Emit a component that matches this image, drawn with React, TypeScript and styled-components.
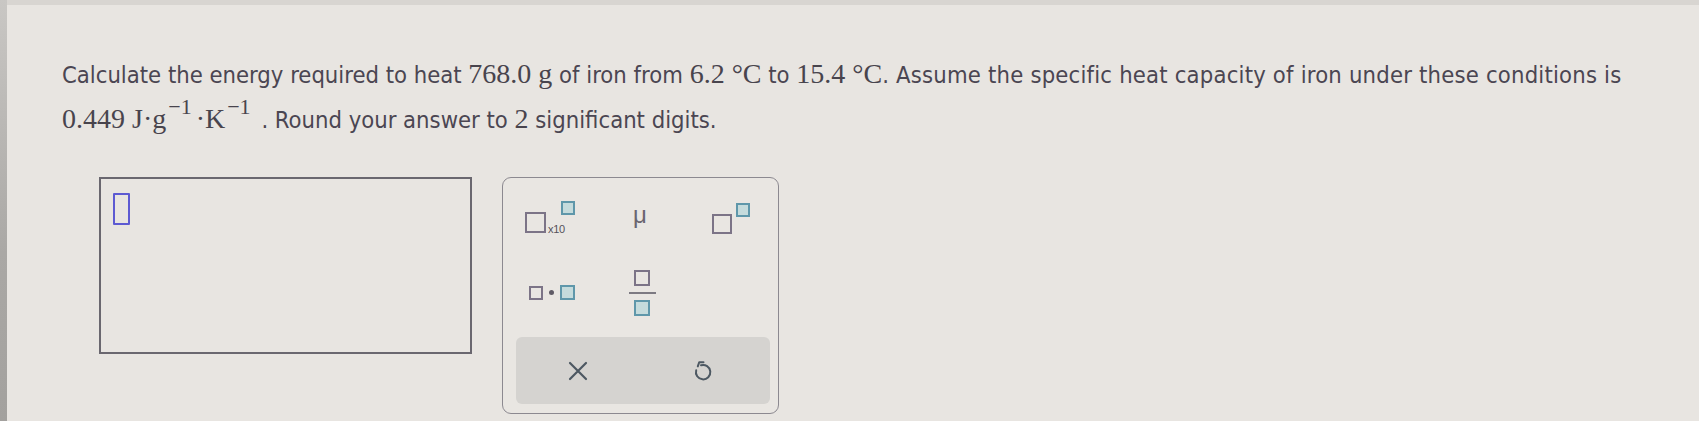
import React from "react";
import styled, { createGlobalStyle } from "styled-components";

const textColor = "#4b4652";
const pageBg = "#e8e5e1";

const GlobalStyle = createGlobalStyle`
  html, body {
    margin: 0;
    padding: 0;
    background: ${pageBg};
  }
`;

const Page = styled.div`
  display: flex;
  width: 1699px;
  height: 421px;
  overflow: hidden;
  background: ${pageBg};
`;

const LeftEdge = styled.div`
  width: 7px;
  flex-shrink: 0;
  background: linear-gradient(180deg, #c9c7c4 0%, #aaa8a5 60%, #a3a19e 100%);
`;

const Main = styled.div`
  flex: 1;
  border-top: 5px solid #d8d5d1;
  padding: 46px 0 0 55px;
  box-sizing: border-box;
`;

const Question = styled.div`
  color: ${textColor};
  font-family: "DejaVu Sans Condensed", "DejaVu Sans", sans-serif;
  font-stretch: condensed;
  font-size: 23.6px;
`;

const Line = styled.div`
  white-space: nowrap;
  height: 45px;
  line-height: 45px;
`;

const Tail = styled.span`
  letter-spacing: 0.2px;
`;

const MathText = styled.span`
  font-family: "Liberation Serif", "Times New Roman", serif;
  font-size: 28px;
  color: #48444d;
`;

const Sup = styled.sup`
  font-size: 22px;
  vertical-align: 0;
  position: relative;
  top: -14px;
  margin: 0 4px 0 2px;
`;

const AnswerRow = styled.div`
  display: flex;
  align-items: flex-start;
  gap: 30px;
  margin: 36px 0 0 37px;
`;

const AnswerBox = styled.div`
  width: 373px;
  height: 177px;
  box-sizing: border-box;
  border: 2px solid #6a676f;
  padding: 14px 0 0 12px;
`;

const Cursor = styled.div`
  width: 17px;
  height: 32px;
  box-sizing: border-box;
  border: 2px solid #5d5ad2;
  border-radius: 1px;
`;

const Palette = styled.div`
  width: 277px;
  height: 237px;
  box-sizing: border-box;
  border: 1.5px solid #8c8990;
  border-radius: 9px;
  display: flex;
  flex-direction: column;
  padding: 1px 0 0 2px;
  background: #e9e6e2;
`;

const KeyGrid = styled.div`
  display: grid;
  grid-template-columns: repeat(3, 90px);
  grid-template-rows: 75px 81px;
`;

const Key = styled.div`
  display: flex;
  align-items: center;
  justify-content: center;
  color: #67626d;
`;

const Slot = styled.span<{ $accent?: boolean; $size: number }>`
  display: inline-block;
  flex-shrink: 0;
  width: ${(p) => p.$size}px;
  height: ${(p) => p.$size}px;
  box-sizing: border-box;
  border: 2px solid ${(p) => (p.$accent ? "#5f97aa" : "#7c7487")};
  background: ${(p) => (p.$accent ? "#c5dbdc" : "transparent")};
`;

const SciKey = styled.div`
  display: flex;
  align-items: flex-end;
  height: 32px;
`;

const Times10 = styled.span`
  font-family: "Liberation Sans", Arial, sans-serif;
  font-size: 11px;
  letter-spacing: -0.3px;
  color: #55515a;
  margin-left: 2px;
  line-height: 1;
  margin-bottom: -2px;
`;

const SupSlot = styled.div<{ $shift: number }>`
  align-self: flex-start;
  margin-left: ${(p) => p.$shift}px;
`;

const Mu = styled.span`
  font-family: "Liberation Sans", Arial, sans-serif;
  font-size: 24px;
  color: #6a6570;
  margin-top: -4px;
`;

const PowerKey = styled.div`
  display: flex;
  align-items: flex-end;
  height: 31px;
  margin: 4px 0 0 2px;
`;

const DotKey = styled.div`
  display: flex;
  align-items: center;
  gap: 6px;
  margin: -4px 0 0 4px;
`;

const Dot = styled.span`
  width: 5px;
  height: 5px;
  border-radius: 50%;
  background: #5f5b66;
`;

const FractionKey = styled.div`
  display: flex;
  flex-direction: column;
  align-items: center;
  gap: 6px;
  margin: -4px 0 0 4px;
`;

const FractionBar = styled.div`
  width: 27px;
  height: 2px;
  background: #7d7a82;
`;

const ActionBar = styled.div`
  flex: 1;
  margin: 2px 8px 9px 11px;
  padding-right: 5px;
  background: #d5d3d0;
  border-radius: 6px;
  display: grid;
  grid-template-columns: 1fr 1fr;
  align-items: center;
  justify-items: center;
`;

const IconButton = styled.button`
  border: none;
  background: transparent;
  padding: 0;
  display: flex;
  color: #4d5862;
  cursor: pointer;
`;

function ClearIcon() {
  return (
    <svg width="22" height="22" viewBox="0 0 22 22" fill="none">
      <path d="M3 3 L19 19 M19 3 L3 19" stroke="currentColor" strokeWidth="2.2" strokeLinecap="round" />
    </svg>
  );
}

function UndoIcon() {
  return (
    <svg width="24" height="24" viewBox="0 0 24 24" fill="none">
      <path
        d="M10 6.3 A7.2 7.2 0 1 1 5.2 11.2"
        stroke="currentColor"
        strokeWidth="2"
        strokeLinecap="round"
      />
      <path
        d="M12.5 3.2 L8.2 3.2 L6.8 7.4"
        stroke="currentColor"
        strokeWidth="2"
        strokeLinecap="round"
        strokeLinejoin="round"
      />
    </svg>
  );
}

export default function App() {
  return (
    <>
      <GlobalStyle />
      <Page>
        <LeftEdge />
        <Main>
          <Question>
            <Line>
              Calculate the energy required to heat <MathText>768.0 g</MathText> of iron from{" "}
              <MathText>6.2 °C</MathText> to <MathText>15.4 °C</MathText>
              <Tail>. Assume the specific heat capacity of iron under these conditions is</Tail>
            </Line>
            <Line>
              <MathText>
                0.449 J·g<Sup>−1</Sup>·K<Sup>−1</Sup>
              </MathText>{" "}
              . Round your answer to <MathText>2</MathText> significant digits.
            </Line>
          </Question>

          <AnswerRow>
            <AnswerBox>
              <Cursor />
            </AnswerBox>

            <Palette>
              <KeyGrid>
                <Key>
                  <SciKey>
                    <Slot $size={21} />
                    <Times10>x10</Times10>
                    <SupSlot $shift={-4}>
                      <Slot $accent $size={14} />
                    </SupSlot>
                  </SciKey>
                </Key>
                <Key>
                  <Mu>μ</Mu>
                </Key>
                <Key>
                  <PowerKey>
                    <Slot $size={20} />
                    <SupSlot $shift={4}>
                      <Slot $accent $size={14} />
                    </SupSlot>
                  </PowerKey>
                </Key>
                <Key>
                  <DotKey>
                    <Slot $size={14} />
                    <Dot />
                    <Slot $accent $size={15} />
                  </DotKey>
                </Key>
                <Key>
                  <FractionKey>
                    <Slot $size={16} />
                    <FractionBar />
                    <Slot $accent $size={16} />
                  </FractionKey>
                </Key>
                <Key />
              </KeyGrid>

              <ActionBar>
                <IconButton aria-label="Clear">
                  <ClearIcon />
                </IconButton>
                <IconButton aria-label="Undo">
                  <UndoIcon />
                </IconButton>
              </ActionBar>
            </Palette>
          </AnswerRow>
        </Main>
      </Page>
    </>
  );
}
